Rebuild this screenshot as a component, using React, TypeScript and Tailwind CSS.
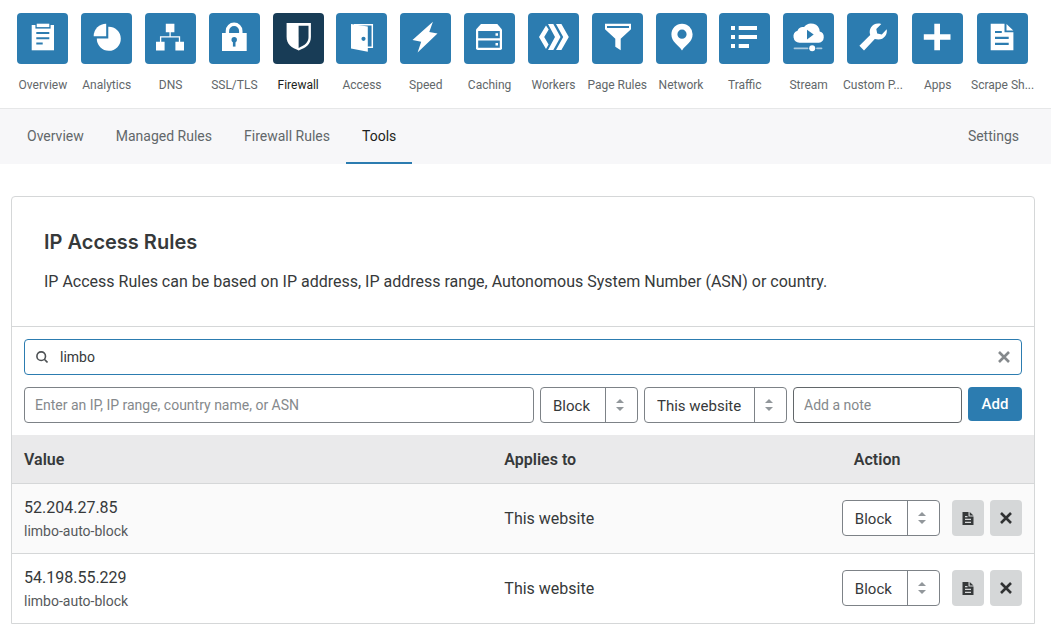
import { useState, type ReactNode } from "react";

type NavItem = { label: string; icon: ReactNode; active?: boolean; wide?: boolean };

const BLUE = "#2c7cb0";

const navItems: NavItem[] = [
  {
    label: "Overview",
    icon: (
      <>
        <path d="M14.7 12H37v25.3H14.7z" />
        <path d="M18.4 10.4h15.2v5.2H18.4z" fill={BLUE} />
        <path d="M19.7 10.7h12.6v3.4H19.7z" />
        <path d="M19.3 19h13v2h-13zM19.3 24.2h13v2h-13zM19.3 29.5h6.4v2h-6.4z" fill={BLUE} />
      </>
    ),
  },
  {
    label: "Analytics",
    icon: (
      <>
        <path d="M25.2 10.7A12.4 12.4 0 0 0 12.7 23.2H25.2z" />
        <path d="M27.3 13.8A12 12 0 1 1 15.8 25.6H27.3z" />
      </>
    ),
  },
  {
    label: "DNS",
    icon: (
      <>
        <path d="M20.8 10.7h8.6v8.6h-8.6zM11 28.8h8.6v8.6H11zM30.4 28.8H39v8.6h-8.6z" />
        <path d="M25.1 19v5M15.6 29v-5.2h18.9V29" fill="none" stroke="white" strokeWidth="1.3" />
      </>
    ),
  },
  {
    label: "SSL/TLS",
    icon: (
      <>
        <path d="M13 20h24.7v18H13z" />
        <path d="M18.4 21v-3a6.7 6.7 0 0 1 13.4 0v3" fill="none" stroke="white" strokeWidth="3.4" />
        <circle cx="25.2" cy="26.8" r="2.7" fill={BLUE} />
        <path d="M23.9 27h2.6v6.6h-2.6z" fill={BLUE} />
      </>
    ),
  },
  {
    label: "Firewall",
    active: true,
    icon: (
      <>
        <path d="M13.600 10h24.300v14c0 7.500-5 10.500-12.200 13.500C18.500 34.500 13.600 31.500 13.600 24z" />
        <path d="M25.600 12.700h9.900V24c0 5.500-3.500 8-9.900 10.900z" fill="#183c56" />
      </>
    ),
  },
  {
    label: "Access",
    icon: (
      <>
        <path d="M18 11.700h18.300v22.600H30" fill="none" stroke="white" strokeWidth="1.500" />
        <path d="M15 10.900l16.800 2.600v25.200L15 35.600z" />
        <circle cx="27.500" cy="25.800" r="2.100" fill={BLUE} />
      </>
    ),
  },
  { label: "Speed", icon: <path d="M32.900 8.700 12.500 26.900l8.700 1.800-3.600 10.800 19.900-19-8.200-1.600z" /> },
  {
    label: "Caching",
    icon: (
      <>
        <path d="M17 11h16.300l4.700 5.500V35.300a1.800 1.800 0 0 1-1.800 1.800H13.800A1.800 1.800 0 0 1 12 35.300V16.500z" />
        <path d="M14.200 18h21.600v7.200H14.200zM14.200 27.600h21.600v7.200H14.200z" fill={BLUE} />
        <path d="M31.500 20.300h2.500v2.500h-2.500zM31.500 29.900h2.500v2.500h-2.500z" />
      </>
    ),
  },
  {
    label: "Workers",
    icon: (
      <>
        <path d="M18 12.500 11 24l7 12 2.600-4.500L16.200 24l4.500-7.500z" />
        <path d="M20 11h5.300l7.200 13-7.200 13H20l7-13z" />
        <path d="M28 11h5.400l7.400 13-7.400 13H28l7.200-13z" />
      </>
    ),
  },
  {
    label: "Page Rules",
    icon: (
      <>
        <path d="M13 10.700h26v5.600l-10.300 9.500v11.500l-5.400-3.600v-7.900L13 16.300z" />
        <path d="M15 13h22v2H15z" fill={BLUE} />
      </>
    ),
  },
  {
    label: "Network",
    icon: (
      <path
        fillRule="evenodd"
        d="M26 10.700a10.600 10.600 0 0 0-10.600 10.600C15.400 29 22 31.500 26 37.500c4-6 10.600-8.500 10.600-16.200A10.600 10.600 0 0 0 26 10.700zm0 5.900a4.600 4.600 0 1 1 0 9.200 4.600 4.600 0 0 1 0-9.200z"
      />
    ),
  },
  {
    label: "Traffic",
    icon: (
      <path d="M12 13h4v4h-4zM12 22h4v4h-4zM12 31h4v4h-4zM19.700 13H38v4H19.700zM19.700 22H38v4H19.700zM19.700 31H30v4H19.700z" />
    ),
  },
  {
    label: "Stream",
    icon: (
      <>
        <path d="M16.500 29.700a6.200 6.200 0 0 1-2-12 6 6 0 0 1 6.600-3.600 8.600 8.600 0 0 1 15.600 4.500 5.700 5.700 0 0 1-.8 11.100z" />
        <path d="M24 16.800v9.600l6.700-4.800z" fill={BLUE} />
        <path d="M11.500 35.300h13M34 35.300h4.500" stroke="white" strokeOpacity=".6" strokeWidth="1.800" strokeLinecap="round" />
        <circle cx="29.200" cy="35.200" r="3" />
      </>
    ),
  },
  {
    label: "Custom P...",
    wide: true,
    icon: (
      <path d="M34.300 10.900 29.300 16l.9 4.500 4.600 1 4.900-5.200c1 4.900-2.500 10.300-8.300 10.300-1.500 0-2.600-.2-3.600-.5L17 37.400l-4.600-4.700 10.800-10.800c-2-6.200 2.600-13.200 11.100-11z" />
    ),
  },
  { label: "Apps", wide: true, icon: <path d="M22.300 10.700H28v10.500h10.500v5.600H28v10.500h-5.700V26.800H11.800v-5.600h10.500z" /> },
  {
    label: "Scrape Sh...",
    wide: true,
    icon: (
      <>
        <path d="M13.700 10.700h13.800v8.600h8.900v18H13.700z" />
        <path d="M29.500 10.900v6.600h6.800z" />
        <path d="M18 18h6.800v2H18zM18 23.700h13.700v2.300H18zM18 29.700h13.700V32H18z" fill={BLUE} />
      </>
    ),
  },
];

const tabs = ["Overview", "Managed Rules", "Firewall Rules", "Tools"];

const rules = [
  { value: "52.204.27.85", note: "limbo-auto-block", appliesTo: "This website" },
  { value: "54.198.55.229", note: "limbo-auto-block", appliesTo: "This website" },
];

function Select({ label, options, className }: { label: string; options: string[]; className: string }) {
  return (
    <div className={"relative h-9 shrink-0 " + className}>
      <select
        aria-label={label}
        className="h-full w-full appearance-none rounded border border-[#7d8287] bg-white pt-0.5 pr-8 pl-3 text-[15px] text-[#36393a]"
      >
        {options.map((o) => (
          <option key={o}>{o}</option>
        ))}
      </select>
      <span className="pointer-events-none absolute inset-y-0 right-0 flex w-[33px] items-center justify-center border-l border-[#7d8287] pr-1">
        <svg width="8" height="12" viewBox="0 0 8 12" fill="#92979b" aria-hidden="true">
          <path d="M4 0l4 4H0zM4 12L0 8h8z" />
        </svg>
      </span>
    </div>
  );
}

function Cross({ size }: { size: number }) {
  return (
    <svg width={size} height={size} viewBox="0 0 12 12" fill="none" stroke="currentColor" strokeWidth="2.600" aria-hidden="true">
      <path d="M1 1l10 10M11 1L1 11" />
    </svg>
  );
}

export default function App() {
  const [query, setQuery] = useState("limbo");

  return (
    <div className="bg-white font-[Roboto,'Liberation_Sans',sans-serif] text-[15px] text-[#36393a]">
      <nav aria-label="Products" className="flex h-[108px] pt-[13px] pr-4 pl-[11px]">
        {navItems.map((item) => (
          <a
            key={item.label}
            href="#"
            className={
              "flex min-w-0 basis-0 flex-col items-center text-xs whitespace-nowrap " +
              (item.wide ? "grow-65 " : "grow-64 ") +
              (item.active ? "text-[#1d1f20]" : "text-[#62676a]")
            }
          >
            <span className={"size-[51px] rounded " + (item.active ? "bg-[#183c56]" : "bg-[#2c7cb0]")}>
              <svg viewBox="0 0 51 51" fill="white" className="size-full" aria-hidden="true">
                {item.icon}
              </svg>
            </span>
            <span className="mt-3 leading-[18px]">{item.label}</span>
          </a>
        ))}
      </nav>

      <nav
        aria-label="Firewall"
        className="flex h-14 justify-between border-t border-[#e6e7e8] bg-[#f7f7f9] pr-4 pl-[11px] text-sm text-[#62676a]"
      >
        <div className="flex">
          {tabs.map((tab) => (
            <a
              key={tab}
              href="#"
              className={
                "flex items-center border-b-2 px-4 " +
                (tab === "Tools" ? "border-[#2c7cb0] text-[#1d1f20]" : "border-transparent")
              }
            >
              {tab}
            </a>
          ))}
        </div>
        <a href="#" className="flex items-center border-b-2 border-transparent px-4">
          Settings
        </a>
      </nav>

      <main className="pt-8 pr-4 pb-2 pl-[11px]">
        <section className="rounded-t border border-[#d5d7d8]">
          <header className="border-b border-[#d5d7d8] px-8 pt-[31px] pb-8">
            <h1 className="font-[Inter,'Liberation_Sans',sans-serif] text-xl leading-7 font-semibold">IP Access Rules</h1>
            <p className="mt-3.5 text-base leading-6">
              IP Access Rules can be based on IP address, IP address range, Autonomous System Number (ASN) or country.
            </p>
          </header>

          <div className="flex flex-col gap-3 p-3">
            <div className="flex h-9 items-center rounded border border-[#2c7cb0] px-[11px]">
              <svg width="12" height="12" viewBox="0 0 12 12" fill="none" stroke="#4d5154" strokeWidth="1.600" aria-hidden="true">
                <circle cx="5.200" cy="5.200" r="4.300" />
                <path d="M8.300 8.300l3.200 3.200" />
              </svg>
              <input
                aria-label="Search rules"
                value={query}
                onChange={(e) => setQuery(e.target.value)}
                className="h-full min-w-0 flex-1 px-3 text-sm outline-none"
              />
              <button type="button" aria-label="Clear search" onClick={() => setQuery("")} className="text-[#85898c]">
                <Cross size={12} />
              </button>
            </div>

            <form className="flex gap-1.5" onSubmit={(e) => e.preventDefault()}>
              <input
                aria-label="IP, IP range, country name, or ASN"
                placeholder="Enter an IP, IP range, country name, or ASN"
                className="h-9 min-w-0 flex-1 rounded border border-[#7d8287] px-2.5 text-sm placeholder:text-[#85898c]"
              />
              <Select label="Action" options={["Block", "Challenge", "Allow"]} className="w-[98px]" />
              <Select label="Applies to" options={["This website", "All websites"]} className="w-[143px]" />
              <input
                aria-label="Note"
                placeholder="Add a note"
                className="h-9 w-[169px] rounded border border-[#62676a] px-2.5 text-sm placeholder:text-[#85898c]"
              />
              <button type="submit" className="h-[34px] w-[54px] rounded bg-[#2c7cb0] text-[15px] font-medium text-white">
                Add
              </button>
            </form>
          </div>

          <table className="w-full table-fixed border-collapse text-left">
            <thead>
              <tr className="h-12 bg-[#eaeaeb] text-base">
                <th className="w-[47%] px-3 pt-0.5 font-semibold">Value</th>
                <th className="w-[34.2%] px-3 pt-0.5 font-semibold">Applies to</th>
                <th className="px-3 pt-0.5 font-semibold">Action</th>
              </tr>
            </thead>
            <tbody>
              {rules.map((rule) => (
                <tr key={rule.value} className="h-[70px] border-t border-[#d5d7d8] odd:bg-[#fafafa]">
                  <td className="px-3 pt-0.5">
                    <div className="text-base leading-6">{rule.value}</div>
                    <div className="text-sm leading-[22px] text-[#56595c]">{rule.note}</div>
                  </td>
                  <td className="px-3 pt-0.5 text-base">{rule.appliesTo}</td>
                  <td className="pr-3">
                    <div className="flex gap-1.5">
                      <Select label={"Action for " + rule.value} options={["Block", "Challenge", "Allow"]} className="mr-1.5 w-[98px]" />
                      <button
                        type="button"
                        aria-label="Edit note"
                        className="flex h-9 w-8 items-center justify-center rounded bg-[#d5d7d8] text-[#36393a]"
                      >
                        <svg width="12" height="13" viewBox="0 0 12 13" fill="currentColor" aria-hidden="true">
                          <path
                            fillRule="evenodd"
                            d="M.5 0h6v4.500h5V13H.5zM3 4v1.200h2.500V4zM3 6.800V8h6V6.800zM3 9.700v1.200h6V9.700z"
                          />
                          <path d="M7.700 0L11.500 3.500H7.700z" />
                        </svg>
                      </button>
                      <button
                        type="button"
                        aria-label="Delete rule"
                        className="flex h-9 w-8 items-center justify-center rounded bg-[#d5d7d8] text-[#303233]"
                      >
                        <Cross size={12} />
                      </button>
                    </div>
                  </td>
                </tr>
              ))}
            </tbody>
          </table>
        </section>
      </main>
    </div>
  );
}
